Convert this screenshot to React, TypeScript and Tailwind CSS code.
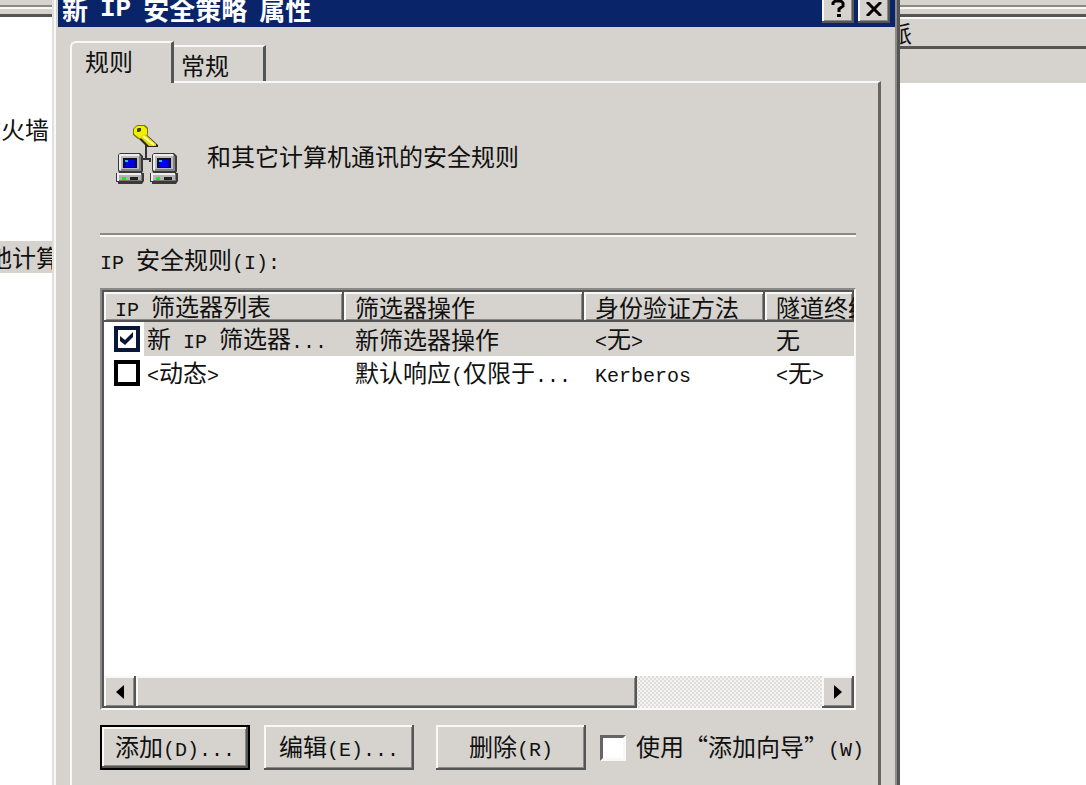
import React, { useState } from 'react';

const RAISED = 'bg-[#d6d3ce] shadow-[inset_-2px_-2px_#555555,inset_2px_2px_#f8f8f6,inset_-3px_-3px_#8a8986]';
const PUSH = 'h-[45px] w-[150px] shrink-0 whitespace-nowrap';

// SimSun-like metrics: full-width glyphs are 24px, latin ones are 12px
const Txt: React.FC<{ children: string }> = ({ children }) => (
  <span>
    {children.split(/([\x20-\x7e]+)/).map((part, i) =>
      i % 2 ? (
        <span key={i} className="whitespace-pre font-['Liberation_Mono',monospace] text-xl leading-none">{part}</span>
      ) : (
        part
      )
    )}
  </span>
);

const Computer: React.FC<{ x: number }> = ({ x }) => (
  <g transform={`translate(${x} 29)`}>
    <path d="M4 0h20l3 3v15l-1 2h2v8l-2 3H2v-2H0v-9h3l-1-3V2z" fill="#3a3a3a" />
    <path d="M4 1h19l1 1v16H4l-1-1V2z" fill="#bcbcbc" />
    <path d="M4 1h19v2H5v14H3V2z" fill="#eeeeee" />
    <path d="M23 3h2v15H5v-2h18z" fill="#848484" />
    <path d="M7 5h14v10H7z" fill="#101020" />
    <path d="M9 7h10v7H9z" fill="#0000ee" />
    <path d="M9 7h3v2H9z" fill="#22c7ee" />
    <path d="M1 20h24v8H1z" fill="#b4b4b4" />
    <path d="M1 20h24v2H3v6H1z" fill="#eeeeee" />
    <path d="M25 21h1v7H3v-1h22z" fill="#777777" />
    <path d="M6 24h4v3H6z" fill="#10f020" />
    <path d="M14 24h8v3h-8z" fill="#222222" />
  </g>
);

const SecurityIcon = () => (
  <svg width="64" height="64" viewBox="0 0 64 64" aria-hidden="true">
    <path d="M31 21v14h-4v3M31 35h4v3" fill="none" stroke="#333333" strokeWidth="2" />
    <path d="M31 10l12 11v2H32l-9-9z" fill="#2a2a10" />
    <path d="M22 1h8l3 3v6l-4 5h-6l-5-4V5z" fill="#77760a" />
    <path d="M22 2h7l3 3v5l-3 4h-5l-5-4V5z" fill="#f4ee00" />
    <path d="M30 10l11 10v2h-7l-9-9z" fill="#e2da00" />
    <path d="M28 12l11 9" stroke="#ffffb0" strokeWidth="2" />
    <path d="M23 4h3v3l-2 1h-2V5z" fill="#44440a" />
    <Computer x={1} />
    <Computer x={35} />
  </svg>
);

const RowCheck: React.FC<{ label: string; checked: boolean; onChange: () => void }> = ({ label, checked, onChange }) => (
  <span className="grid size-[26px] shrink-0">
    <input
      type="checkbox"
      aria-label={label}
      checked={checked}
      onChange={onChange}
      className="col-start-1 row-start-1 size-[26px] appearance-none border-4 border-black bg-white checked:border-[#081838]"
    />
    {checked && (
      <svg viewBox="0 0 26 26" className="pointer-events-none col-start-1 row-start-1 size-[26px]">
        <path d="M6 10l5 4 8-8v5l-8 8-5-4z" fill="#081838" />
      </svg>
    )}
  </span>
);

const columns = ['IP 筛选器列表', '筛选器操作', '身份验证方法', '隧道终结点'];

const initialRules = [
  { name: '新 IP 筛选器...', action: '新筛选器操作', auth: '<无>', tunnel: '无', on: true },
  { name: '<动态>', action: '默认响应(仅限于...', auth: 'Kerberos', tunnel: '<无>', on: false },
];

export default function App() {
  const [rules, setRules] = useState(initialRules);
  const [wizard, setWizard] = useState(false);

  const toggle = (index: number) => {
    setRules(rules.map((r, i) => (i === index ? { ...r, on: !r.on } : r)));
  };

  return (
    <div className="flex h-screen overflow-hidden bg-white font-['Noto_Sans_CJK_SC',sans-serif] text-2xl leading-6 text-[#111111]">
      {/* console tree behind the dialog */}
      <aside className="w-[52px] shrink-0 overflow-hidden whitespace-nowrap">
        <div className="h-[7px] border-b-2 border-[#8a8986] bg-[#d6d3ce]" />
        <div className="h-[10px] border-t-2 border-b-3 border-t-[#f8f8f6] border-b-[#555555] bg-[#d6d3ce]" />
        <div className="mt-24 flex h-8 items-center justify-end pr-[3px]">防火墙</div>
        <div className="mt-24 flex h-8 items-center bg-[#d6d3ce]">
          <span className="-ml-9">本地计算机</span>
        </div>
      </aside>

      <main className="flex min-w-0 flex-1 flex-col border-r-3 border-l-2 border-r-[#555555] border-l-[#e2e0dc] bg-[#d6d3ce]">
        <div className="flex flex-1 flex-col border-r-2 border-l-2 border-r-[#8a8986] border-l-[#f8f8f6] pl-[2px]">
          <header className="flex h-[27px] shrink-0 items-end gap-1 overflow-hidden bg-[#0a246a] pr-[5px] pb-1 pl-1 text-white">
            <h1 className="flex flex-1 gap-3 pb-[2px] text-[26px] font-bold whitespace-nowrap">
              <span>新</span>
              <span className="font-['Liberation_Mono',monospace]">IP</span>
              <span>安全策略</span>
              <span>属性</span>
            </h1>
            <button aria-label="帮助" className={`${RAISED} flex h-7 w-8 items-center justify-center`}>
              <svg width="14" height="18" viewBox="0 0 14 18">
                <path d="M2 5V3l2-2h6l2 2v3L8 9v3" fill="none" stroke="#000" strokeWidth="3" />
                <path d="M6 14h4v3H6z" />
              </svg>
            </button>
            <button aria-label="关闭" className={`${RAISED} flex h-7 w-8 items-center justify-center`}>
              <svg width="16" height="14" viewBox="0 0 16 14">
                <path d="M1 0l14 14M15 0L1 14" stroke="#000" strokeWidth="3" />
              </svg>
            </button>
          </header>

          <div className="flex flex-1 flex-col pt-[14px] pr-[14px] pl-3">
            <div role="tablist" className="flex h-10 items-end">
              <button
                role="tab"
                aria-selected="true"
                className="relative -mb-[2px] flex h-[42px] w-[104px] rounded-tl-md border-t-2 border-r-3 border-l-2 border-t-[#f8f8f6] border-r-[#555555] border-l-[#f8f8f6] bg-[#d6d3ce] pt-[6px] pl-[13px]"
              >
                规则
              </button>
              <button
                role="tab"
                aria-selected="false"
                className="flex h-9 w-[92px] border-t-2 border-r-3 border-t-[#f8f8f6] border-r-[#555555] pt-[6px] pl-[7px]"
              >
                常规
              </button>
            </div>

            <section className="flex-1 border-t-2 border-r-3 border-l-2 border-t-[#f8f8f6] border-r-[#666563] border-l-[#f8f8f6] pr-[22px] pl-7 whitespace-nowrap">
              <div className="flex h-[152px] items-center gap-7 border-b-2 border-[#8a8986] pb-1 pl-[15px]">
                <SecurityIcon />
                <p>和其它计算机通讯的安全规则</p>
              </div>
              <div className="h-[2px] bg-[#f8f8f6]" />
              <h2 className="mt-[10px]"><Txt>IP 安全规则(I):</Txt></h2>

              <div className="mt-[14px] flex h-[422px] flex-col border-2 border-t-[#8a8986] border-r-[#f8f8f6] border-b-[#f8f8f6] border-l-[#8a8986] bg-white">
                <div className="flex-1 overflow-hidden border-t-2 border-l-2 border-[#555555]">
                  <table className="w-full table-fixed border-collapse">
                    <colgroup>
                      <col className="w-[240px]" />
                      <col className="w-[240px]" />
                      <col className="w-[181px]" />
                      <col />
                    </colgroup>
                    <thead>
                      <tr>
                        {columns.map((c) => (
                          <th key={c} className={`${RAISED} h-[30px] overflow-hidden p-0 pl-[11px] text-left font-normal`}>
                            <Txt>{c}</Txt>
                          </th>
                        ))}
                      </tr>
                    </thead>
                    <tbody>
                      {rules.map((r, i) => (
                        <tr key={r.name} className={i === 0 ? 'bg-[#d6d3ce]' : 'bg-white'}>
                          <td className="h-[34px] p-0">
                            <div className="flex h-[34px] items-center">
                              <div className="flex h-full w-10 shrink-0 items-center bg-white pl-[10px]">
                                <RowCheck label={r.name} checked={r.on} onChange={() => toggle(i)} />
                              </div>
                              <div className="pl-[3px]"><Txt>{r.name}</Txt></div>
                            </div>
                          </td>
                          <td className="p-0 pl-[11px]"><Txt>{r.action}</Txt></td>
                          <td className="p-0 pl-[11px]"><Txt>{r.auth}</Txt></td>
                          <td className="p-0 pl-[11px]"><Txt>{r.tunnel}</Txt></td>
                        </tr>
                      ))}
                    </tbody>
                  </table>
                </div>
                <div className="flex h-8 border-l-2 border-[#555555]">
                  <button aria-label="向左滚动" className={`${RAISED} flex w-8 items-center justify-center`}>
                    <svg width="8" height="14" viewBox="0 0 8 14"><path d="M8 0v14L0 7z" /></svg>
                  </button>
                  <div className="flex-1 bg-[repeating-conic-gradient(#f4f3f1_0_25%,#e0deda_0_50%)] bg-[length:4px_4px]">
                    <div className={`${RAISED} h-full w-[73%]`} />
                  </div>
                  <button aria-label="向右滚动" className={`${RAISED} flex w-8 items-center justify-center`}>
                    <svg width="8" height="14" viewBox="0 0 8 14"><path d="M0 0v14l8-7z" /></svg>
                  </button>
                </div>
              </div>

              <div className="mt-[15px] flex items-center">
                <button className={`${RAISED} ${PUSH} border-2 border-black`}><Txt>添加(D)...</Txt></button>
                <button className={`${RAISED} ${PUSH} ml-[14px]`}><Txt>编辑(E)...</Txt></button>
                <button className={`${RAISED} ${PUSH} ml-[22px]`}><Txt>删除(R)</Txt></button>
                <label className="ml-[14px] flex items-center gap-[10px]">
                  <input
                    type="checkbox"
                    checked={wizard}
                    onChange={(e) => setWizard(e.target.checked)}
                    className="size-[26px] shrink-0 appearance-none border-3 border-t-[#666563] border-r-[#f8f8f6] border-b-[#f8f8f6] border-l-[#666563] bg-white checked:bg-[#555555]"
                  />
                  <Txt>使用“添加向导”(W)</Txt>
                </label>
              </div>
            </section>
          </div>
        </div>
      </main>

      {/* policy list behind the dialog */}
      <aside className="w-[186px] shrink-0 overflow-hidden">
        <div className="h-[7px] border-b-2 border-[#8a8986] bg-[#d6d3ce]" />
        <div className="h-[10px] border-t-2 border-b-3 border-t-[#f8f8f6] border-b-[#555555] bg-[#d6d3ce]" />
        <div className="flex h-8 items-center border-t-2 border-b-3 border-t-[#f8f8f6] border-b-[#555555] bg-[#d6d3ce]">
          <span className="-ml-3">派</span>
        </div>
        <div className="h-[34px] bg-[#d6d3ce]" />
      </aside>
    </div>
  );
}
